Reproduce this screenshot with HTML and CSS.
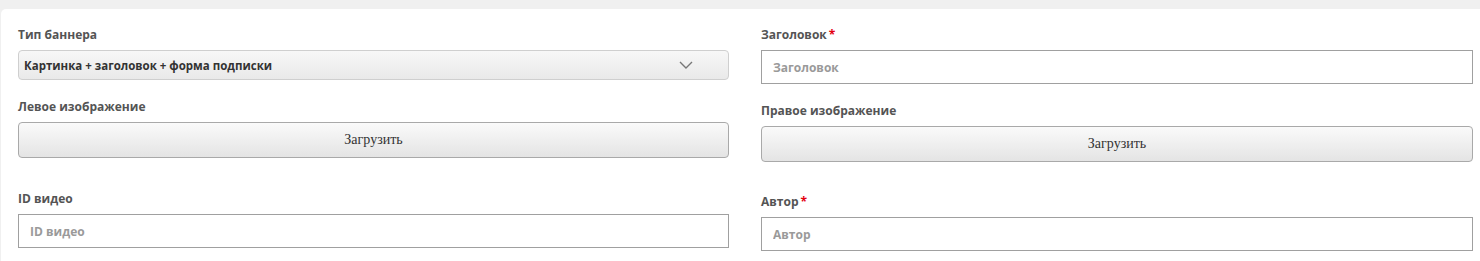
FILE: index.html
```html
<!DOCTYPE html>
<html lang="ru">

<head>
    <meta charset="UTF-8">
    <meta name="viewport" content="width=device-width, initial-scale=1.0">
    <title>Баннер</title>
    <link rel="stylesheet" href="styles.css">
</head>

<body>
    <div class="card">
        <div class="form-grid">
            <!-- Left column -->
            <div class="column">
                <div class="field">
                    <label class="label">Тип баннера</label>
                    <div class="select">
                        <span>Картинка + заголовок + форма подписки</span>
                        <svg class="chevron" width="14" height="8" viewBox="0 0 14 8">
                            <path d="M1 1 L7 7 L13 1" fill="none" stroke="#777" stroke-width="1.4"/>
                        </svg>
                    </div>
                </div>
                <div class="field field-upload">
                    <label class="label">Левое изображение</label>
                    <button class="upload">Загрузить</button>
                </div>
                <div class="field field-last">
                    <label class="label">ID видео</label>
                    <input type="text" placeholder="ID видео" />
                </div>
            </div>

            <!-- Right column -->
            <div class="column">
                <div class="field">
                    <label class="label">Заголовок<span class="req">*</span></label>
                    <input type="text" placeholder="Заголовок" />
                </div>
                <div class="field field-upload">
                    <label class="label">Правое изображение</label>
                    <button class="upload">Загрузить</button>
                </div>
                <div class="field field-last-r">
                    <label class="label">Автор<span class="req">*</span></label>
                    <input type="text" placeholder="Автор" />
                </div>
            </div>
        </div>
    </div>
</body>

</html>
```

FILE: styles.css
```css
/* Page */
body {
    margin: 0;
    background: #f0f0f0;
    font-family: 'Open Sans', 'Noto Sans', sans-serif;
    color: #555;
    padding: 9px 0 0 1px;
    overflow: hidden;
}

/* White card */
.card {
    background: #ffffff;
    border-radius: 5px 0 0 0;
    padding: 17px 0 30px 17px;
    min-height: 300px;
}

.form-grid {
    display: grid;
    grid-template-columns: 711px 712px;
    column-gap: 32px;
}

.column {
    display: flex;
    flex-direction: column;
}

.field {
    display: flex;
    flex-direction: column;
}

.label {
    font-size: 12px;
    font-weight: 700;
    color: #545454;
    line-height: 18px;
    margin-bottom: 6px;
}

.req {
    color: #e3000f;
    margin-left: 2px;
}

/* Select box */
.select {
    height: 28px;
    border: 1px solid #cfcfcf;
    border-radius: 4px;
    background: linear-gradient(#f7f7f7, #e9e9e9);
    display: flex;
    align-items: center;
    justify-content: space-between;
    padding: 0 35px 0 5px;
    font-size: 11.5px;
    font-weight: 700;
    color: #333;
}

.chevron {
    display: block;
}

/* Upload buttons */
.field-upload {
    margin-top: 18px;
}

.upload {
    height: 36px;
    border: 1px solid #a9a9a9;
    border-radius: 4px;
    background: linear-gradient(#fafafa, #e4e4e4);
    font-family: 'Liberation Serif', serif;
    font-size: 14px;
    color: #333;
    cursor: pointer;
}

.field-last {
    margin-top: 32px;
}

.field-last-r {
    margin-top: 31px;
}

/* Text inputs */
input {
    height: 34px;
    box-sizing: border-box;
    border: 1px solid #a0a0a0;
    border-radius: 0;
    padding: 0 11px;
    font-family: 'Open Sans', 'Noto Sans', sans-serif;
    font-size: 12px;
    font-weight: 700;
    color: #333;
    outline: none;
}

input::placeholder {
    color: #9a9a9a;
}
```
